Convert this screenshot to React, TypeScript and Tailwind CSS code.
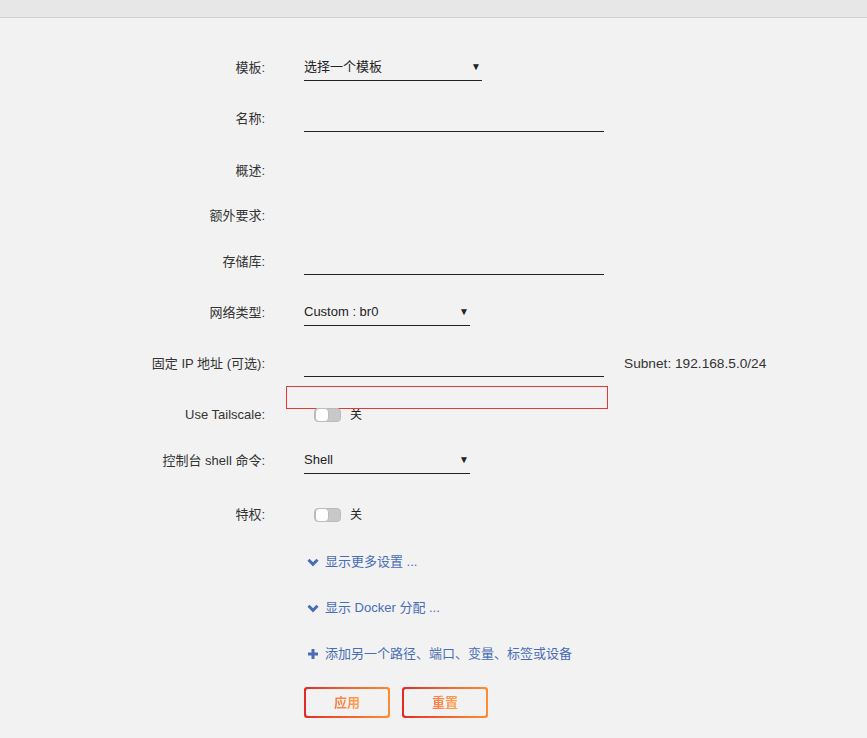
import React from "react";

const font = { fontFamily: '"Liberation Sans", "Noto Sans CJK SC", sans-serif' };

function Row({ label, mt, children }: { label: string; mt: string; children?: React.ReactNode }) {
  return (
    <div className={`flex items-center h-[28px] ${mt}`}>
      <div className="w-[265px] text-right text-[13px] text-[#333] whitespace-nowrap">{label}</div>
      <div className="ml-[39px] flex items-center h-full">{children}</div>
    </div>
  );
}

function Select({ text, w }: { text: string; w: string }) {
  return (
    <div className={`${w} self-start h-[27px] pb-[1px] border-b border-[#222] flex items-center justify-between text-[13px] text-[#222]`}>
      <span>{text}</span>
      <span className="text-[10px] mr-[1px] text-[#222]">▼</span>
    </div>
  );
}

function Input() {
  return <div className="w-[300px] self-start h-[27px] border-b border-[#222]" />;
}

function Toggle() {
  return (
    <div className="flex items-center ml-[10px]">
      <div className="w-[27px] h-[14px] rounded-[4px] bg-[#c8c8c8] border border-[#bbb] relative">
        <div className="absolute left-0 top-[-1px] w-[14px] h-[14px] rounded-[4px] bg-white border border-[#bbb]" />
      </div>
      <span className="ml-[9px] text-[12px] text-[#222]">关</span>
    </div>
  );
}

function Chevron() {
  return (
    <svg width="12" height="9" viewBox="0 0 12 9" className="mr-[6px]">
      <path d="M1.5 1.8 L6 6.3 L10.5 1.8" fill="none" stroke="#486db5" strokeWidth="3" />
    </svg>
  );
}

function PlusIcon() {
  return (
    <svg width="12" height="12" viewBox="0 0 12 12" className="mr-[6px]">
      <path d="M6 1 V11 M1 6 H11" fill="none" stroke="#486db5" strokeWidth="3" />
    </svg>
  );
}

function GradButton({ text, ml }: { text: string; ml?: string }) {
  return (
    <div className={`p-[2px] rounded-[3px] bg-gradient-to-r from-[#e22828] to-[#ff8c2f] ${ml ?? ""}`}>
      <div className="w-[82px] h-[27px] rounded-[2px] bg-[#f2f2f2] flex items-center justify-center">
        <span className="text-[13px] font-bold bg-gradient-to-r from-[#f87a4a] to-[#ffa04a] bg-clip-text text-transparent">{text}</span>
      </div>
    </div>
  );
}

export default function App() {
  return (
    <div className="w-[867px] h-[738px] bg-[#f2f2f2] overflow-hidden" style={font}>
      <div className="h-[18px] bg-[#e7e7e7] border-b border-[#d2d2d2]" />
      <div className="relative flex flex-col">
        <Row label="模板:" mt="mt-[36px]">
          <Select text="选择一个模板" w="w-[178px]" />
        </Row>
        <Row label="名称:" mt="mt-[23px]">
          <Input />
        </Row>
        <Row label="概述:" mt="mt-[24px]" />
        <Row label="额外要求:" mt="mt-[17px]" />
        <Row label="存储库:" mt="mt-[18px]">
          <Input />
        </Row>
        <Row label="网络类型:" mt="mt-[23px]">
          <Select text="Custom : br0" w="w-[166px]" />
        </Row>
        <Row label="固定 IP 地址 (可选):" mt="mt-[23px]">
          <Input />
          <span className="ml-[20px] text-[13.7px] text-[#333] whitespace-nowrap">Subnet: 192.168.5.0/24</span>
        </Row>
        <div className="absolute left-[286px] top-[368px] w-[322px] h-[23px] border border-[#e53935]" />
        <Row label="Use Tailscale:" mt="mt-[23px]">
          <Toggle />
        </Row>
        <Row label="控制台 shell 命令:" mt="mt-[18px]">
          <Select text="Shell" w="w-[166px]" />
        </Row>
        <Row label="特权:" mt="mt-[26px]">
          <Toggle />
        </Row>
        <Row label="" mt="mt-[19px]">
          <div className="flex items-center ml-[3px] text-[13px] text-[#486db5]">
            <Chevron />
            <span>显示更多设置 ...</span>
          </div>
        </Row>
        <Row label="" mt="mt-[18px]">
          <div className="flex items-center ml-[3px] text-[13px] text-[#486db5]">
            <Chevron />
            <span>显示 Docker 分配 ...</span>
          </div>
        </Row>
        <Row label="" mt="mt-[18px]">
          <div className="flex items-center ml-[3px] text-[13px] text-[#486db5]">
            <PlusIcon />
            <span>添加另一个路径、端口、变量、标签或设备</span>
          </div>
        </Row>
        <div className="flex mt-[19px] ml-[304px]">
          <GradButton text="应用" />
          <GradButton text="重置" ml="ml-[12px]" />
        </div>
      </div>
    </div>
  );
}
